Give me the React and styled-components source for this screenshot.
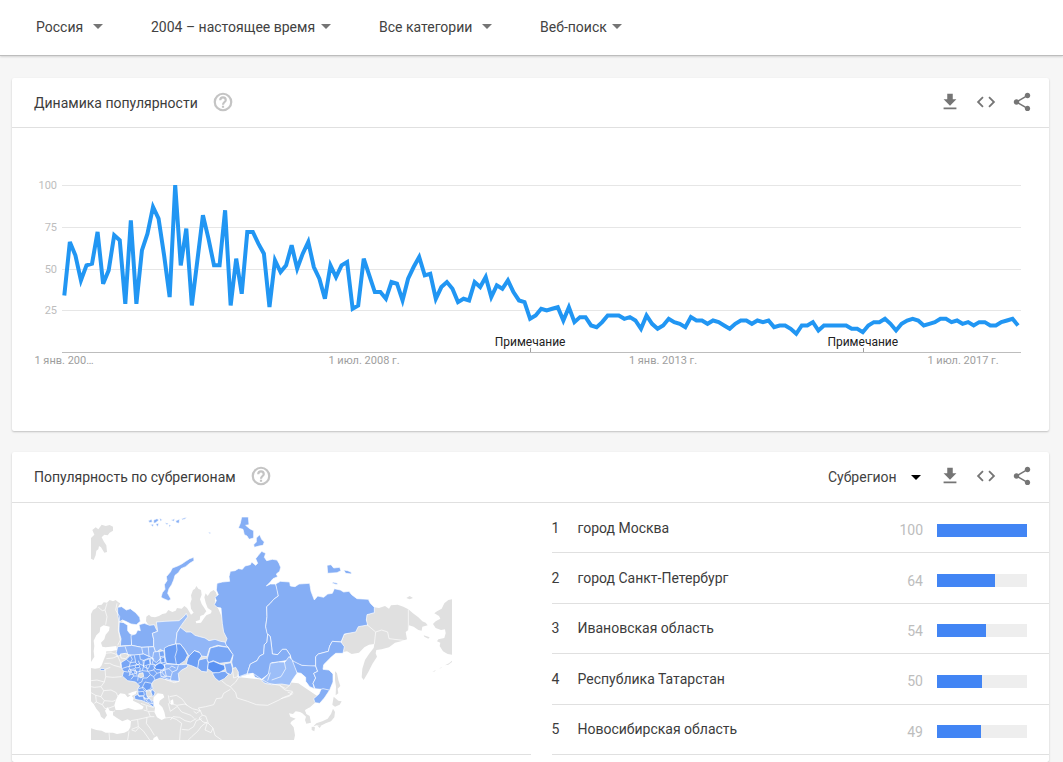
import styled, { createGlobalStyle } from 'styled-components';
import { MdCode, MdShare } from 'react-icons/md';

const GlobalStyle = createGlobalStyle`
    * {
        box-sizing: border-box;
        margin: 0;
        padding: 0;
    }
    body {
        font-family: Roboto, sans-serif;
        font-size: 14px;
        background: #f6f6f6;
        color: #3c3c3c;
    }
`

const Page = styled.div`
    min-height: 100vh;
    display: flex;
    flex-direction: column;
`
const FilterBar = styled.header`
    display: flex;
    align-items: center;
    gap: 48px;
    height: 56px;
    padding: 0 36px 2px;
    background: #fff;
    border-bottom: 1px solid #bdbdbd;
    box-shadow: 0 1px 2px rgba(0, 0, 0, .14);
`
const Picker = styled.label`
    display: flex;
    align-items: center;
    gap: ${({ $gap }) => $gap || 5}px;
    color: ${({ $dark }) => ($dark ? '#000' : '#757575')};
`
const Select = styled.select`
    appearance: none;
    border: 0;
    background: none;
    color: #424242;
    font-family: inherit;
    font-size: 14px;
    line-height: 20px;
    cursor: pointer;
`
const Content = styled.main`
    flex: 1;
    display: flex;
    flex-direction: column;
    gap: 21px;
    padding: 22px 14px 0 12px;
`
const Card = styled.section`
    background: #fff;
    border-radius: 2px;
    box-shadow: 0 1px 2px rgba(0, 0, 0, .22);
    flex: ${({ $fill }) => ($fill ? '1' : 'none')};
`
const CardHeader = styled.div`
    display: flex;
    align-items: center;
    height: ${({ $tall }) => ($tall ? '51px' : '50px')};
    padding: 0 16px 0 22px;
    border-bottom: 1px solid #e0e0e0;
`
const CardTitle = styled.h2`
    font-size: 14px;
    line-height: 20px;
    font-weight: 400;
`
const HelpButton = styled.button`
    display: flex;
    margin-left: 14px;
    padding-bottom: 2px;
    border: 0;
    background: none;
    color: #c4c4c4;
    cursor: pointer;
`
const Tools = styled.div`
    display: flex;
    align-items: center;
    gap: 18px;
    margin-left: auto;
`
const Actions = styled.div`
    display: flex;
    gap: 14px;
    padding-bottom: 2px;
`
const ActionButton = styled.button`
    display: flex;
    border: 0;
    background: none;
    color: #757575;
    cursor: pointer;
`
const Chart = styled.svg`
    display: block;
    width: 100%;
    height: auto;
`
const RegionsBody = styled.div`
    display: grid;
    grid-template-columns: minmax(0, 1fr) minmax(0, 1fr);
`
const MapBox = styled.div`
    display: flex;
    justify-content: center;
    align-items: center;
    border-bottom: 1px solid #e0e0e0;
`
const RegionMap = styled.svg`
    width: 361px;
    height: 223px;
`
const RegionList = styled.ol`
    display: grid;
    grid-template-rows: repeat(5, 1fr);
    height: 252px;
    margin-left: 21px;
    list-style: none;
`
const RegionRow = styled.li`
    display: flex;
    align-items: center;
    padding-right: 22px;
    border-bottom: 1px solid #e0e0e0;
`
const Rank = styled.span`
    width: 26px;
`
const RegionName = styled.span`
    flex: 1;
`
const Score = styled.div`
    display: flex;
    align-items: center;
    gap: 14px;
    padding-top: 5px;
    color: #bdbdbd;
`
const Track = styled.div`
    width: 90px;
    height: 13px;
    background: #eee;
`
const Fill = styled.div`
    height: 100%;
    background: #4285f4;
`

const filters = [
    { label: 'Регион', value: 'Россия', gap: 9 },
    { label: 'Период', value: '2004 – настоящее время' },
    { label: 'Категория', value: 'Все категории', gap: 9 },
    { label: 'Тип поиска', value: 'Веб-поиск' },
]

const regions = [
    { name: 'город Москва', score: 100 },
    { name: 'город Санкт-Петербург', score: 64 },
    { name: 'Ивановская область', score: 54 },
    { name: 'Республика Татарстан', score: 50 },
    { name: 'Новосибирская область', score: 49 },
]

// one value per month, starting in January 2004
const trend = [
    34, 66, 58, 43, 52, 53, 72, 41, 49, 70, 67, 29,
    79, 29, 61, 71, 87, 80, 58, 33, 100, 52, 74, 28,
    55, 82, 68, 52, 52, 85, 28, 56, 35, 72, 72, 65,
    59, 27, 55, 48, 52, 64, 50, 59, 66, 51, 44, 32,
    52, 45, 52, 54, 26, 28, 56, 46, 36, 36, 32, 42,
    41, 31, 44, 51, 57, 46, 47, 32, 39, 42, 38, 30,
    32, 31, 42, 39, 45, 33, 40, 38, 43, 36, 31, 30,
    20, 22, 26, 25, 26, 27, 19, 27, 18, 21, 21, 16,
    15, 18, 22, 22, 22, 20, 21, 19, 14, 22, 17, 14,
    16, 20, 18, 17, 15, 21, 19, 19, 17, 19, 18, 16,
    14, 17, 19, 19, 17, 19, 18, 19, 15, 16, 16, 14,
    11, 16, 16, 18, 13, 16, 16, 16, 16, 16, 14, 14,
    12, 16, 18, 18, 20, 17, 13, 17, 19, 20, 19, 16,
    17, 18, 20, 20, 18, 19, 17, 18, 16, 18, 18, 16,
    16, 18, 19, 20, 16,
]

const chartX = (month) => 52.3 + month * 5.545
const chartY = (value) => 224.2 - value * 1.67

const dateLabels = [
    { x: 52, text: '1 янв. 200…' },
    { x: 352, text: '1 июл. 2008 г.' },
    { x: 651, text: '1 янв. 2013 г.' },
    { x: 951, text: '1 июл. 2017 г.' },
]

const GREY = '#e0e0e0'
const LIGHT = '#9cbef8'
const SOFT = '#91b6f7'
const BASE = '#85aef5'
const MID = '#78a6f5'
const STRONG = '#6c9ef4'
const TOP = '#5a92f3'

const land = [
    // Eurasia
    'M18 312L24 300 34 294 38 286 50 284 56 277 66 278 74 270 84 274 92 270 100 277 106 280 100 290 112 300 112 340 140 420 190 420 204 350 190 344 183 334 184 320 192 314 198 320 210 322 222 318 232 312 243 310 250 300 262 306 272 302 276 294 290 296 298 288 306 294 312 304 318 314 326 308 318 296 316 280 320 268 318 256 324 240 330 236 334 228 340 236 348 240 350 254 345 268 350 282 358 294 364 304 356 314 346 318 344 330 332 334 334 340 348 338 356 326 364 316 378 310 380 302 368 294 362 278 358 262 362 250 368 258 376 246 386 240 392 246 396 256 390 270 392 282 400 296 410 320 430 400 450 500 640 520 700 560 690 578 675 592 660 600 664 612 674 618 678 638 664 641 660 630 663 620 652 610 645 606 632 604 624 612 612 610 616 620 632 626 620 634 616 640 626 652 628 664 630 676 627 690L222 690 216 678 206 684 204 690 18 690 18 655 34 660 50 662 62 668 84 668 96 672 118 668 130 662 136 652 138 634 128 628 112 634 96 624 84 616 84 604 74 602 68 592 60 602 66 616 58 628 48 620 44 608 34 596 26 582 18 574Z',
    // Svalbard
    'M18 84L28 74 22 60 32 52 40 58 50 44 62 48 74 45 84 50 84 62 74 68 68 76 58 74 50 82 56 94 64 106 66 126 58 128 48 112 42 108 40 118 34 122 32 136 26 150 18 146Z',
    // Chukotka, Magadan, Kamchatka
    'M868 292L882 294 900 288 912 296 918 286 938 284 955 290 970 298 984 310 1000 322 1012 334 1022 338 1028 346 1012 350 1010 362 1000 360 986 350 972 346 970 360 962 366 966 388 948 394 930 398 912 412 890 418 874 420 872 430 876 440 862 462 850 486 836 510 830 502 832 476 840 450 852 432 866 414 868 402 852 404 838 412 822 428 800 432 786 424 774 426 770 395 778 374 812 364 820 350 846 344 844 316 868 308Z',
    // Alaska
    'M1101 268L1090 270 1078 280 1070 296 1056 304 1048 310 1062 318 1066 326 1052 334 1044 342 1052 354 1068 360 1080 358 1082 370 1078 384 1060 388 1056 394 1066 398 1064 408 1074 424 1088 432 1101 434Z',
    'M1101 452L1092 460 1080 466 1090 464 1101 456Z M1072 470L1062 476 1068 474Z M1052 480L1042 486 1050 484Z M964 264L974 258 984 264 974 268Z M1016 376L1034 382 1030 386 1018 380Z',
    // Sakhalin, Japan
    'M750 484L756 490 760 510 766 528 758 536 760 550 752 556 753 530 750 510Z M746 560L760 572 770 574 764 584 750 590 742 584Z M744 596L750 606 748 622 738 634 722 640 706 648 694 646 684 650 694 640 712 634 728 626 738 612Z M680 650L690 652 688 664 680 660Z M698 648L708 648 704 654Z',
]

const water = [
    // Baltic and its gulfs
    'M46 352L56 346 74 350 72 362 62 374 58 388 48 398 52 410 62 412 76 410 94 408 96 420 78 424 64 424 62 436 56 450 50 466 44 474 30 476 18 474 18 456 28 440 26 424 28 408 26 392 34 376 44 366Z',
    // Black Sea with Azov
    'M92 572L98 558 106 550 120 552 128 562 138 556 146 564 144 572 160 580 176 590 172 598 150 600 130 594 110 600 92 600 88 586Z M128 552L142 546 156 542 152 552 140 558Z',
    // Caspian
    'M206 562L218 550 234 552 238 562 224 572 222 582 232 592 238 606 242 624 230 630 216 622 208 606 210 594 204 580Z',
    // Adriatic
    'M18 586L28 596 36 610 40 626 30 620 18 606Z',
    'M256 572L264 568 266 582 258 584Z',
]

const provinces = [
    // Krasnoyarsk
    [BASE, 'M396 220L412 216 434 214 432 200 436 184 450 182 460 176 472 178 480 168 496 164 500 156 512 166 518 160 512 146 520 136 530 124 542 130 538 142 545 152 562 148 576 150 582 160 587 172 584 184 574 192 578 200 564 206 556 216 544 228 556 222 572 222 578 240 580 258 566 268 556 280 545 290 546 320 542 350 548 372 546 396 538 404 536 432 524 438 516 452 496 462 490 480 486 494 472 498 462 503 458 486 444 474 440 456 444 436 430 412 420 402 426 386 416 366 412 340 410 318 408 294 396 292 388 284 394 272 390 262 400 254 394 240Z'],
    // Severnaya Zemlya
    [BASE, 'M470 21L490 21 492 44 482 46 494 56 506 62 506 84 492 88 486 78 478 74 474 58 460 54 466 40Z M524 74L530 88 538 96 534 106 522 108 508 112 506 104 514 96 514 84Z'],
    // Novaya Zemlya
    [BASE, 'M314 146L326 142 327 152 314 160 302 170 288 176 280 188 270 196 266 210 260 224 252 236 248 250 258 268 250 272 236 266 228 262 232 248 240 238 238 224 246 212 244 200 256 186 262 174 278 168 290 162 302 154Z'],
    // Franz Josef Land
    [BASE, 'M190 32L200 28 202 36 194 38Z M206 30L216 26 222 30 212 38 206 40Z M224 24L232 30 226 34Z M196 44L206 42 204 50Z M212 42L222 40 218 50Z M240 38L250 40 246 44Z M252 44L258 46 252 52Z M258 30L270 26 266 34Z M272 32L284 28 282 40 274 38Z M290 26L304 22 302 26 292 30Z M370 66L378 68 374 72Z'],
    // Yakutia
    [BASE, 'M572 222L586 214 614 216 616 228 630 230 642 222 674 220 678 244 688 270 698 258 716 262 728 252 742 250 748 236 766 240 776 246 792 244 800 254 816 266 850 268 856 280 868 292 868 308 846 314 844 330 848 345 820 350 812 366 778 372 768 396 742 394 734 408 730 424 700 432 692 440 692 468 670 470 650 466 632 460 620 452 616 436 604 418 592 418 578 434 562 432 560 412 556 380 546 370 542 350 546 320 545 290 556 280 566 268 580 258Z'],
    [BASE, 'M726 166L738 164 746 174 764 172 768 182 756 188 728 190Z M776 180L788 182 798 186 800 192 782 190Z M744 216L758 220 756 224 742 220Z'],
    // Irkutsk
    [BASE, 'M548 372L556 380 560 412 562 432 578 434 592 418 604 418 616 436 612 450 580 456 560 458 556 488 530 508 510 502 504 490 486 494 490 480 496 462 516 452 524 438 536 432 538 404 546 396Z'],
    // Buryatia and Zabaykalye
    [LIGHT, 'M530 512L550 492 556 460 580 456 600 456 612 440 622 450 632 466 636 490 622 510 614 526 590 522 560 524 540 520Z'],
    // Amur
    [BASE, 'M622 452L650 466 692 468 698 484 686 490 692 504 684 520 688 536 674 530 662 514 662 502 648 490 636 488Z'],
    // Khabarovsk and Primorye
    [BASE, 'M734 408L742 394 768 396 778 410 774 430 752 430 738 442 716 464 714 478 732 480 744 492 744 516 734 540 718 564 704 580 690 578 686 566 702 552 708 538 690 536 684 520 692 504 686 490 698 484 692 468 692 440 700 432 730 424Z'],
    // Murmansk
    [BASE, 'M98 292L110 290 124 300 136 296 152 308 164 322 166 334 154 344 138 342 122 334 112 330 102 336 98 312Z'],
    // Karelia
    [BASE, 'M102 336L116 338 128 346 128 362 136 372 148 376 140 390 140 406 106 408 108 386 102 366Z'],
    // Arkhangelsk
    [BASE, 'M138 376L152 372 158 360 166 362 162 344 178 340 194 346 208 344 214 358 218 364 202 370 206 388 206 410 170 412 140 406Z'],
    // Komi
    [LIGHT, 'M214 336L240 334 282 332 296 320 304 310 308 320 296 336 286 350 276 368 272 402 250 408 236 424 226 418 212 428 206 410 206 388 202 370 218 364Z'],
    // Khanty-Mansi
    [SOFT, 'M286 352L304 366 318 366 330 376 344 380 360 384 372 392 390 388 406 394 420 396 424 406 430 412 398 406 374 414 366 440 348 438 342 426 328 422 312 438 300 420 286 402 272 402 276 368Z'],
    // Vologda, Leningrad, Novgorod
    [SOFT, 'M94 428L98 410 140 406 170 412 206 410 212 428 206 446 176 432 148 436 132 434 120 430 106 436 98 438Z'],
    // central districts
    [MID, 'M108 458L124 448 136 436 176 432 206 446 214 426 236 422 244 460 276 464 272 486 282 504 282 514 258 512 240 508 226 504 206 512 200 522 204 536 190 544 186 560 196 568 206 576 206 592 190 580 172 572 150 568 148 558 160 552 158 536 164 528 152 516 128 512 112 498 116 484 110 476Z'],
    // Astrakhan
    [MID, 'M200 538L210 546 208 556 200 560 196 552Z'],
    // Sverdlovsk and Perm
    [STRONG, 'M238 414L250 408 272 402 286 402 300 420 308 436 300 452 282 464 244 460 240 440Z'],
    // Bashkiria, Chelyabinsk, Kurgan
    [SOFT, 'M240 462L290 464 310 462 306 472 290 480 280 490 282 514 262 512 230 500Z'],
    // Tyumen
    [STRONG, 'M308 446L314 436 328 422 344 428 350 438 342 450 340 476 322 468 304 462Z'],
    // Omsk
    [MID, 'M342 450L366 444 370 460 366 486 350 484 338 474Z'],
    // Tomsk
    [MID, 'M368 442L376 414 400 408 428 412 444 434 436 456 404 460 384 452 372 458 366 450Z'],
    // Kemerovo
    [BASE, 'M418 462L438 458 444 480 438 494 424 488Z'],
    // Altai
    [MID, 'M382 490L398 486 420 484 430 494 418 506 402 514 390 504Z'],
    // Novosibirsk
    [TOP, 'M370 458L386 454 404 462 418 466 420 478 402 488 384 488 368 476Z'],
    // Volga
    [TOP, 'M206 470L222 458 234 462 240 472 232 480 214 478Z'],
    [STRONG, 'M174 452L192 444 196 462 190 476 176 470Z M130 480L150 476 154 490 136 494Z M180 516L200 520 198 536 180 544 172 532Z M158 546L176 544 178 556 162 560Z M226 440L238 438 240 458 228 458Z'],
    [TOP, 'M150 466L162 464 164 472 152 474Z'],
    [SOFT, 'M206 426L222 424 226 446 214 458 202 448Z M176 564L194 566 204 582 190 578Z M226 482L240 480 244 500 228 500Z'],
    [TOP, 'M46 476L58 476 60 481 46 481Z'],
    [GREY, 'M162 490L174 488 176 500 166 504 160 498Z M106 432L122 430 132 436 122 446 108 444Z M442 476L452 472 460 486 458 500 446 504Z M184 542L196 542 202 556 190 562 184 554Z'],
]

const borders = [
    // districts of central Russia
    'M110 476L128 470 148 466 164 462 178 468 196 462 212 466 226 458 M124 448L136 458 150 456 158 464 M136 436L142 448 136 458 132 472 138 484 132 498 M148 436L152 456 M164 434L166 448 178 452 176 468 172 482 158 486 146 480 128 486 116 484 M178 452L194 446 206 446 202 460 212 466 206 480 190 484 172 482 M190 484L196 494 186 504 174 504 M206 480L216 490 206 500 196 494 M216 490L230 486 240 478 238 462 M206 500L210 510 M138 484L146 498 138 508 M146 498L160 498 158 512 M146 480L150 490 M174 504L170 516 160 520 M230 486L240 498 258 500 262 486 252 476 240 478 M258 500L256 512 M262 486L276 480 280 466 M252 476L260 468 272 474 M226 446L240 440 M170 412L174 432 M190 411L192 438 M120 409L128 432 M160 452L164 462 M226 458L224 446 M160 536L176 532 186 544 M158 556L172 558 182 566 M176 558L178 572 M190 564L184 572 M166 474L164 486 M184 468L188 484 M154 484L156 496 M196 446L196 462 M274 402L276 420 270 440 274 462',
    // Europe
    'M66 280L60 300 66 320 62 344 M40 292L52 302 60 300 M96 280L92 300 104 320 100 360 106 390 98 406 M62 430L78 428 92 432 98 440 M64 446L84 444 98 438 106 456 108 470 M58 460L74 460 86 466 108 472 M60 478L62 500 58 516 36 510 18 512 M60 478L76 472 M62 500L84 502 110 500 M58 516L48 530 28 532 18 530 M48 530L56 542 78 540 94 548 98 558 M56 542L48 560 32 556 18 548 M48 560L58 572 84 574 92 570 M58 572L52 584 60 596 72 594 88 588 M32 556L34 576 52 584 M34 576L28 580 M90 602L84 606',
    // Caucasus and Middle East
    'M168 580L184 586 204 592 M176 600L190 604 208 604 M186 600L184 588 M190 604L196 620 208 620 M138 632L160 628 186 622 196 620 M158 630L160 650 140 658 M160 650L176 664 194 690 M186 622L184 640 196 656 208 676 M132 664L128 690 M72 668L74 690 M140 660L152 664 162 652 M240 624L256 622 274 628 290 640 M290 640L286 660 284 690 M256 630L264 620 284 622 300 632 316 636 334 626 M290 658L310 660 326 650 334 632 350 626 M310 690L320 680 338 664 350 648 366 636',
    // Central Asia
    'M282 514L268 518 240 508 M250 556L254 580 276 586 300 582 322 596 346 602 M250 580L256 604 276 590 M254 560L274 556 290 566 306 586 M276 588L290 606 318 616 328 626 M346 602L334 610 326 604 M346 602L340 594 362 590 386 584 394 566 410 564 416 550 436 538 M346 602L352 616 342 624 354 636 370 640 M370 640L384 654 378 668 360 660 366 640 M370 640L362 618 352 616 M384 654L390 676 410 690 M410 512L424 524 436 530 452 516 462 500 484 492 504 490 M436 530L452 548 456 564 488 574 514 584 548 586 582 570 596 562 622 552 608 546 M504 490L530 508 552 520 584 526 M584 526L600 540 622 544 614 558 588 566 M614 526L602 536 584 526 M624 550L622 546 M660 604L672 594',
    // Far East
    'M970 298L970 360 M868 402L872 366 846 344 M872 366L890 360 908 366 912 386 962 392 M700 540L714 536 732 540 M556 488L548 512 M560 510L588 500 602 476 598 456',
]

const Caret = () => (
    <svg width="10" height="5" viewBox="0 0 10 5" fill="currentColor" aria-hidden="true">
        <path d="M0 0h10L5 5z" />
    </svg>
)

const DownloadIcon = () => (
    <svg width="22" height="22" viewBox="0 0 24 24" fill="currentColor" aria-hidden="true">
        <path d="M19 9h-4V3H9v6H5l7 7 7-7zM5 18v2h14v-2H5z" />
    </svg>
)

const CardActions = () => (
    <Actions>
        <ActionButton aria-label="Скачать"><DownloadIcon /></ActionButton>
        <ActionButton aria-label="Встроить"><MdCode size={22} /></ActionButton>
        <ActionButton aria-label="Поделиться"><MdShare size={22} /></ActionButton>
    </Actions>
)

const Help = () => (
    <HelpButton aria-label="Справка">
        <svg width="22" height="22" viewBox="0 0 24 24" fill="none" stroke="currentColor" strokeWidth="2.4" aria-hidden="true">
            <circle cx="12" cy="12" r="9" />
            <path d="M9 10c0-4 6-4 6 0 0 2-3 2.200-3 5M12 16v2.400" />
        </svg>
    </HelpButton>
)

const TrendChart = () => (
    <Chart viewBox="0 0 1037 303" role="img" aria-label="Динамика популярности">
        {[25, 50, 75, 100].map((value) => (
            <g key={value}>
                <path d={`M50 ${Math.round(chartY(value)) + 0.5}H1009`} stroke="#e6e6e6" />
                <text x="45" y={Math.round(chartY(value)) + 4} fontSize="11" fill="#bdbdbd" textAnchor="end">{value}</text>
            </g>
        ))}
        <path d="M50 224.5H1009" stroke="#bdbdbd" />
        <polyline
            points={trend.map((value, month) => `${chartX(month)},${chartY(value)}`).join(' ')}
            fill="none"
            stroke="#2196f3"
            strokeWidth="4"
        />
        {[84, 144].map((month) => (
            <g key={month}>
                <path d={`M${Math.round(chartX(month)) + 0.5} 220v4`} stroke="#9e9e9e" />
                <text x={chartX(month)} y="218" fontSize="12" fill="#212121" textAnchor="middle">Примечание</text>
            </g>
        ))}
        {dateLabels.map(({ x, text }) => (
            <text key={text} x={x} y="236" fontSize="11" fill="#9e9e9e" textAnchor="middle">{text}</text>
        ))}
    </Chart>
)

const RussiaMap = () => (
    <RegionMap viewBox="18 21 1083 669" role="img" aria-label="Карта субрегионов">
        <g fill={GREY}>
            {land.map((d) => <path key={d} d={d} />)}
        </g>
        <g fill="#fff">
            {water.map((d) => <path key={d} d={d} />)}
        </g>
        <g stroke="#fff" strokeWidth="2" strokeLinejoin="round">
            {provinces.map(([fill, d]) => <path key={d} fill={fill} d={d} />)}
        </g>
        <g fill="none" stroke="#fff" strokeWidth="2" strokeLinejoin="round">
            {borders.map((d) => <path key={d} d={d} />)}
        </g>
    </RegionMap>
)

const App = () => {
  return (
      <Page>
          <GlobalStyle />
          <FilterBar>
              {filters.map(({ label, value, gap }) => (
                  <Picker key={label} $gap={gap}>
                      <Select aria-label={label}>
                          <option>{value}</option>
                      </Select>
                      <Caret />
                  </Picker>
              ))}
          </FilterBar>

          <Content>
              <Card>
                  <CardHeader>
                      <CardTitle>Динамика популярности</CardTitle>
                      <Help />
                      <Tools>
                          <CardActions />
                      </Tools>
                  </CardHeader>
                  <TrendChart />
              </Card>

              <Card $fill>
                  <CardHeader $tall>
                      <CardTitle>Популярность по субрегионам</CardTitle>
                      <Help />
                      <Tools>
                          <Picker $gap={14} $dark>
                              <Select aria-label="Детализация">
                                  <option>Субрегион</option>
                              </Select>
                              <Caret />
                          </Picker>
                          <CardActions />
                      </Tools>
                  </CardHeader>
                  <RegionsBody>
                      <MapBox>
                          <RussiaMap />
                      </MapBox>
                      <RegionList>
                          {regions.map(({ name, score }, index) => (
                              <RegionRow key={name}>
                                  <Rank>{index + 1}</Rank>
                                  <RegionName>{name}</RegionName>
                                  <Score>
                                      {score}
                                      <Track>
                                          <Fill style={{ width: `${score}%` }} />
                                      </Track>
                                  </Score>
                              </RegionRow>
                          ))}
                      </RegionList>
                  </RegionsBody>
              </Card>
          </Content>
      </Page>
  )
}

export default App
